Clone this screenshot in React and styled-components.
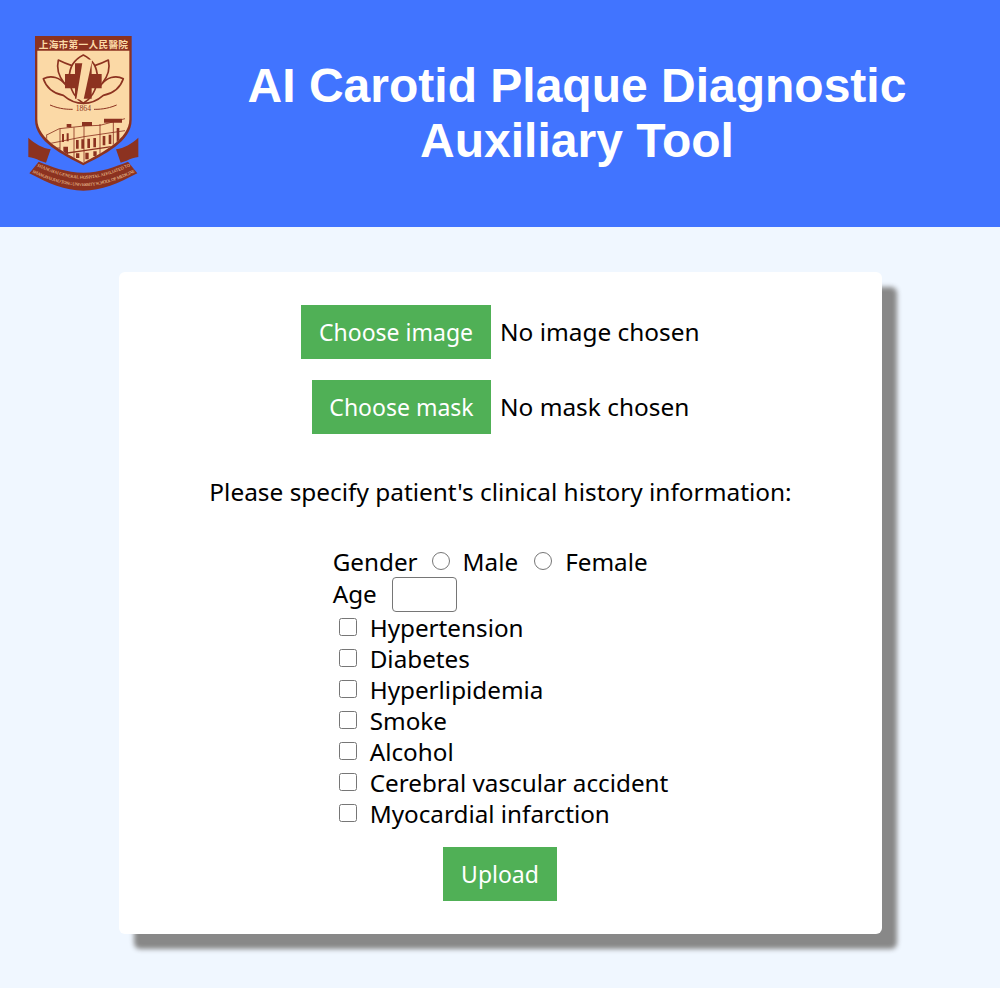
import React from "react";
import styled, { createGlobalStyle } from "styled-components";

const BROWN = "#8c3220";
const CREAM = "#fbd9a6";

const conditions = [
  "Hypertension",
  "Diabetes",
  "Hyperlipidemia",
  "Smoke",
  "Alcohol",
  "Cerebral vascular accident",
  "Myocardial infarction",
];

const shieldInner = "M82 92H358V298C358 358 276 398 220 428C164 398 82 358 82 298Z";

// coordinates follow a 3x view of the crest
const Crest = () => (
  <LogoSvg viewBox="0 0 450 540">
    <defs>
      <clipPath id="shieldClip">
        <path d={shieldInner} />
      </clipPath>
    </defs>
    <path d="M75 48H365V300C365 365 280 405 220 436C160 405 75 365 75 300Z" fill={BROWN} />
    <path d={shieldInner} fill={CREAM} />
    <text x="220" y="83" textAnchor="middle" fontSize="29" fontWeight="700" fill={CREAM} fontFamily="'Noto Sans CJK TC', sans-serif" textLength="268">上海市第一人民醫院</text>

    <g fill="none" stroke={BROWN} strokeWidth="5" strokeLinejoin="round" strokeLinecap="round">
      <path d="M220 105C198 116 178 138 178 172C178 212 200 238 220 250C240 238 262 212 262 172C262 138 242 116 220 105Z" />
      <path d="M184 136C170 132 157 126 145 120C139 146 146 168 162 188" />
      <path d="M256 136C270 132 283 126 295 120C301 146 294 168 278 188" />
      <path d="M168 196C150 172 124 164 100 176C112 212 140 222 160 226C176 240 198 250 220 250C242 250 264 240 280 226C300 222 328 212 340 176C316 164 290 172 272 196" />
    </g>
    <path d="M195 130H245V162H275V205H245V236H195V205H165V162H195Z" fill={BROWN} />
    <path d="M218 122L247 118L221 238H199Z" fill={CREAM} />
    <text x="220" y="273" textAnchor="middle" fontSize="23" fill={BROWN} fontFamily="'Liberation Serif', serif">1864</text>
    <path d="M120 255C150 268 175 268 188 268M252 268C265 268 290 268 320 255" stroke={BROWN} strokeWidth="3" fill="none" />

    <g clipPath="url(#shieldClip)">
      <g fill="none" stroke={BROWN} strokeWidth="2.5">
        <path d="M108 346L148 326L222 318L270 316L345 296" />
        <path d="M112 372L222 350L345 332" />
        <path d="M150 402L222 392L330 376" strokeWidth="4" />
        <path d="M150 326V412M192 322V420M222 316V428M270 312V410M310 302V384" />
        <path d="M110 346V384H150" />
      </g>
      <g fill={BROWN}>
        <path d="M170 312H184V322H170ZM216 306H246V318H216ZM282 296H336V308H282Z" />
        <path d="M156 342H162V366H156ZM170 340H176V364H170ZM198 360H206V386H198ZM214 358H222V386H214ZM232 356H240V384H232ZM250 354H258V382H250ZM278 348H286V376H278ZM296 344H304V372H296ZM320 324H328V366H320Z" />
        <path d="M160 380H174V408H160ZM198 400H208V414H198ZM226 398H236V418H226ZM250 394H260V408H250Z" />
      </g>
    </g>

    <path d="M55 353C75 372 98 384 122 388L108 428L90 422C78 416 66 412 55 411Z" fill={BROWN} />
    <path d="M385 353C365 372 342 384 318 388L332 428L350 422C362 416 374 412 385 411Z" fill={BROWN} />
    <path d="M86 425C125 440 170 458 220 458C270 458 315 440 354 425L382 460C325 490 275 512 220 512C165 512 115 490 58 460Z" fill={BROWN} />
    <path id="ribbonTop" d="M78 438C125 458 170 476 220 476C270 476 315 458 362 438" fill="none" />
    <path id="ribbonBottom" d="M64 456C120 482 170 498 220 498C270 498 320 482 376 456" fill="none" />
    <text fontSize="13" fill={CREAM} fontFamily="'Liberation Serif', serif">
      <textPath href="#ribbonTop" startOffset="1%" textLength="292">SHANGHAI GENERAL HOSPITAL AFFILIATED TO</textPath>
      <textPath href="#ribbonBottom" startOffset="1%" textLength="322">SHANGHAI JIAO TONG UNIVERSITY SCHOOL OF MEDICINE</textPath>
    </text>
  </LogoSvg>
);

const FileRow = ({ button, label, width }) => (
  <FilePicker>
    <GreenButton type="button" $width={width}>{button}</GreenButton>
    <FileName>{label}</FileName>
  </FilePicker>
);

const App = () => (
  <>
    <GlobalStyle />
    <Header>
      <LogoSlot>
        <Crest />
      </LogoSlot>
      <Title>AI Carotid Plaque Diagnostic Auxiliary Tool</Title>
    </Header>
    <Main>
      <Card>
        <FileRow button="Choose image" label="No image chosen" width={190} />
        <FileRow button="Choose mask" label="No mask chosen" width={179} />
        <Prompt>Please specify patient's clinical history information:</Prompt>
        <History>
          <Line>
            Gender
            <Radio type="radio" name="gender" $left={14} />
            Male
            <Radio type="radio" name="gender" $left={16} />
            Female
          </Line>
          <AgeLine>
            Age
            <AgeInput type="text" />
          </AgeLine>
          {conditions.map((item) => (
            <CheckLine key={item}>
              <Check type="checkbox" />
              {item}
            </CheckLine>
          ))}
        </History>
        <UploadRow>
          <GreenButton type="button" $width={114}>Upload</GreenButton>
        </UploadRow>
      </Card>
    </Main>
  </>
);

const GlobalStyle = createGlobalStyle`
  html, body {
    margin: 0;
    background: #f0f7ff;
  }
  body {
    font-family: "Noto Sans", "Open Sans", sans-serif;
    color: #000;
  }
`;

const Header = styled.header`
  display: flex;
  align-items: center;
  height: 227px;
  background: #4174ff;
`;

const LogoSlot = styled.div`
  flex: none;
  width: 154px;
  padding: 20px 0 0 10px;
  align-self: flex-start;
`;

const LogoSvg = styled.svg`
  display: block;
  width: 150px;
  height: 180px;
`;

const Title = styled.h1`
  flex: 1;
  margin: -2px 0 0;
  padding: 0 90px 0 80px;
  text-align: center;
  font-family: "Liberation Sans", Arial, sans-serif;
  font-size: 48px;
  line-height: 55px;
  font-weight: 700;
  color: #fff;
`;

const Main = styled.main`
  display: flex;
  justify-content: center;
  padding: 45px 0 54px 1px;
`;

const Card = styled.section`
  width: 763px;
  box-sizing: border-box;
  padding: 33px 0;
  background: #fff;
  border-radius: 6px;
  box-shadow: 15px 15px 5px #888;
`;

const FilePicker = styled.div`
  display: grid;
  grid-template-columns: 372px 1fr;
  column-gap: 10px;
  align-items: center;
  justify-items: end;
  margin-bottom: 21px;
`;

const GreenButton = styled.button`
  width: ${(p) => p.$width}px;
  height: 54px;
  padding: 0;
  border: 0;
  background: #50b056;
  color: #fff;
  font: inherit;
  font-size: 23px;
`;

const FileName = styled.span`
  justify-self: start;
  margin-left: -1px;
  padding-bottom: 2px;
  font-size: 24.4px;
`;

const Prompt = styled.p`
  margin: 42px 0 0;
  text-align: center;
  font-size: 24.4px;
  line-height: 31px;
`;

const History = styled.div`
  width: fit-content;
  margin: 39px auto 0;
  font-size: 24.25px;
  line-height: 31px;
`;

const Line = styled.div`
  display: flex;
  align-items: center;
  height: 31px;
`;

const AgeLine = styled(Line)`
  height: 35px;
  box-sizing: border-box;
  padding-bottom: 2px;
`;

const CheckLine = styled(Line)`
  padding-left: 6px;
`;

const Radio = styled.input`
  width: 18px;
  height: 18px;
  margin: 0 13px 1px ${(p) => p.$left}px;
`;

const Check = styled.input`
  width: 18px;
  height: 18px;
  margin: 0 13px 1px 0;
`;

const AgeInput = styled.input`
  flex: none;
  width: 65px;
  height: 35px;
  box-sizing: border-box;
  margin: 0 0 -2px 15px;
  border: 1px solid #767676;
  border-radius: 4px;
`;

const UploadRow = styled.div`
  display: flex;
  justify-content: center;
  margin-top: 18px;
  padding-right: 1px;
`;

export default App;
